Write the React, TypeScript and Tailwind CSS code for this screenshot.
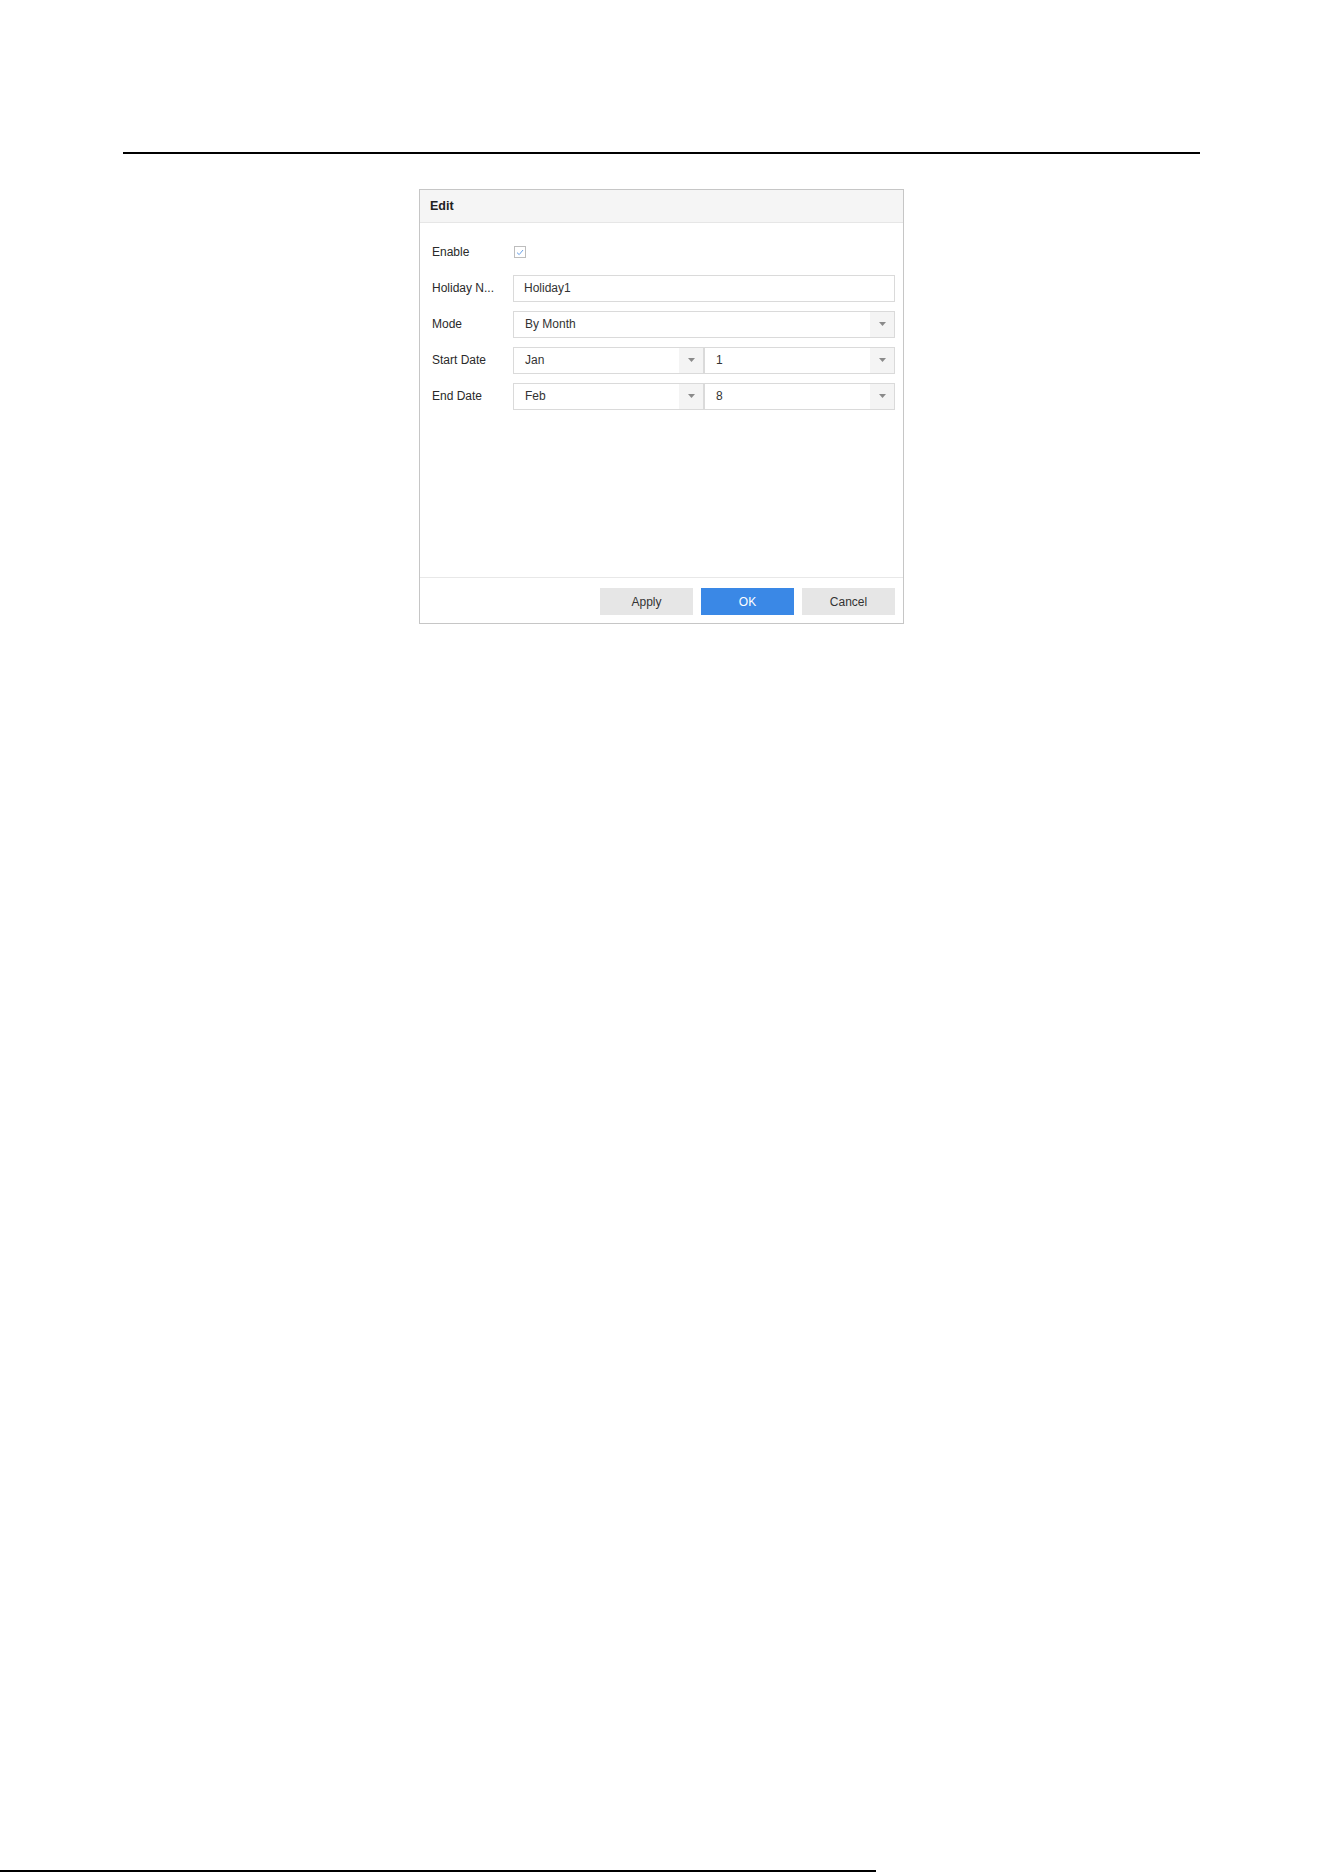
const font = { fontFamily: '"Liberation Sans", Arial, sans-serif' };

function Arrow() {
  return (
    <svg width="7" height="4" viewBox="0 0 7 4" className="block">
      <path d="M0 0 H7 L3.5 4 Z" fill="#8a8a8a" />
    </svg>
  );
}

function Select({ value, className = "" }: { value: string; className?: string }) {
  return (
    <div className={`flex h-[27px] items-stretch border border-[#dadada] bg-white ${className}`}>
      <div className="flex flex-1 items-center pl-[11px] text-[12px] text-[#333]">{value}</div>
      <div className="flex w-[24px] items-center justify-center bg-[#f4f4f4]">
        <Arrow />
      </div>
    </div>
  );
}

function Row({ label, children }: { label: string; children: React.ReactNode }) {
  return (
    <div className="flex h-[36px] items-center">
      <div className="w-[81px] text-[12px] text-[#2a2a2a]">{label}</div>
      <div className="flex flex-1 items-center">{children}</div>
    </div>
  );
}

export default function App() {
  return (
    <div className="relative h-[1872px] w-[1324px] overflow-hidden bg-white" style={font}>
      <div className="ml-[123px] mt-[152px] h-[2px] w-[1077px] bg-black" />

      <div className="ml-[419px] mt-[35px] flex h-[435px] w-[485px] flex-col border border-[#c6c6c6] bg-white">
        {/* Header */}
        <div className="flex h-[33px] items-center border-b border-[#e6e6e6] bg-[#f5f5f5] pl-[10px]">
          <span className="text-[12.5px] font-bold text-[#222]">Edit</span>
        </div>

        {/* Body */}
        <div className="flex-1 pl-[12px] pr-[8px] pt-[11px]">
          <Row label="Enable">
            <div className="ml-[1px] flex h-[12px] w-[12px] items-center justify-center border border-[#bdbdbd] bg-white">
              <svg width="8" height="7" viewBox="0 0 8 7">
                <path d="M1 3.6 L3.2 5.6 L7 1" fill="none" stroke="#6aa2e8" strokeWidth="1" />
              </svg>
            </div>
          </Row>
          <Row label="Holiday N...">
            <div className="flex h-[27px] flex-1 items-center border border-[#dadada] pl-[10px] text-[12px] text-[#333]">
              Holiday1
            </div>
          </Row>
          <Row label="Mode">
            <Select value="By Month" className="flex-1" />
          </Row>
          <Row label="Start Date">
            <Select value="Jan" className="flex-1" />
            <Select value="1" className="flex-1" />
          </Row>
          <Row label="End Date">
            <Select value="Feb" className="flex-1" />
            <Select value="8" className="flex-1" />
          </Row>
        </div>

        {/* Footer */}
        <div className="flex justify-end gap-[8px] border-t border-[#e8e8e8] pb-[8px] pr-[8px] pt-[10px]">
          <button className="h-[27px] w-[93px] bg-[#e6e6e6] text-[12px] text-[#333]">Apply</button>
          <button className="h-[27px] w-[93px] bg-[#3a88e6] text-[12px] text-white">OK</button>
          <button className="h-[27px] w-[93px] bg-[#e6e6e6] text-[12px] text-[#333]">Cancel</button>
        </div>
      </div>

      <div className="absolute bottom-0 left-0 h-[2px] w-[876px] bg-black" />
    </div>
  );
}
